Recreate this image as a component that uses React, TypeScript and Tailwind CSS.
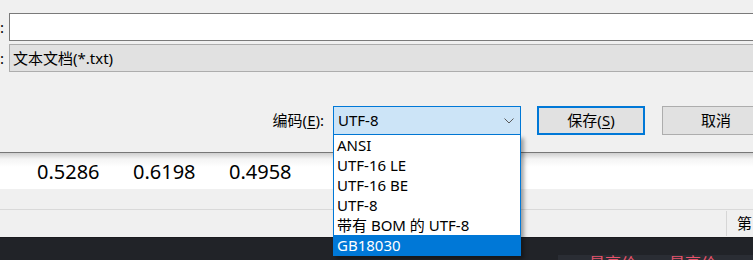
const encodings = ["ANSI", "UTF-16 LE", "UTF-16 BE", "UTF-8", "带有 BOM 的 UTF-8", "GB18030"];
const selected = "GB18030";
const values = ["0.5286", "0.6198", "0.4958"];

const font = "font-['Noto_Sans','Noto_Sans_CJK_SC',sans-serif]";

const Chevron = () => (
  <svg width="10" height="6" viewBox="0 0 10 6" fill="none">
    <polyline points="0.5,0.5 5,5 9.5,0.5" stroke="#5a5a5a" strokeWidth="1" />
  </svg>
);

const App = () => {
  return (
    <div className={`relative w-[753px] h-[260px] overflow-hidden bg-[#f0f0f0] text-[15px] text-black ${font}`}>
      {/* dialog */}
      <div className="h-[153px] border-b border-[#777777] pt-[13px]">
        <div className="flex h-[28px]">
          <span className="w-[9px] leading-[28px]">:</span>
          <div className="flex-1 bg-white border border-[#7a7a7a] border-r-0" />
        </div>
        <div className="flex h-[28px] mt-[3px]">
          <span className="w-[9px] leading-[28px]">:</span>
          <div className="flex-1 bg-[#e1e1e1] border border-[#adadad] border-r-0 pl-[3px] leading-[26px]">
            文本文档(*.txt)
          </div>
        </div>
        <div className="flex h-[29px] mt-[34px]">
          <div className="w-[333px] shrink-0 flex justify-end items-center pr-[9px]">
            编码(<span className="underline underline-offset-2">E</span>):
          </div>
          <div className="w-[188px] shrink-0 flex items-center justify-between bg-[#cce4f7] border border-[#0078d7] pl-[4px] pr-[6px]">
            <span>UTF-8</span>
            <Chevron />
          </div>
          <button className="ml-[16px] w-[108px] shrink-0 bg-[#e1e1e1] border-2 border-[#0078d7] flex items-center justify-center">
            保存(<span className="underline underline-offset-2">S</span>)
          </button>
          <button className="ml-[17px] w-[108px] shrink-0 bg-[#e1e1e1] border border-[#adadad] flex items-center justify-center">
            取消
          </button>
        </div>
      </div>

      {/* table row under the dialog */}
      <div className="h-[36px] flex items-center pl-[37px] bg-[linear-gradient(to_bottom,#cfcfcf,#f4f4f4_6px,#ffffff_14px)] text-[20px]">
        {values.map((v) => (
          <div key={v} className="w-[96px] shrink-0 pt-[1px]">
            {v}
          </div>
        ))}
      </div>
      <div className="h-[20px]" />
      <div className="h-px bg-[#d9d9d9]" />
      <div className="h-[27px] flex">
        <div className="ml-[726px] w-px bg-[#d6d6d6] my-[1px]" />
        <div className="pl-[10px] leading-[27px] whitespace-nowrap">第</div>
      </div>
      <div className="h-[23px] bg-[#212328] border-t border-[#1a1b1f] overflow-hidden">
        <div className="ml-[558px] mt-[17px] h-[10px] bg-[#2a2d34] flex text-[#e8536b] text-[16px] leading-[16px] whitespace-nowrap">
          <span className="ml-[31px]">最高价</span>
          <span className="ml-[32px]">最高价</span>
        </div>
      </div>

      {/* open dropdown */}
      <ul className="absolute left-[333px] top-[135px] w-[188px] bg-white border border-t-0 border-[#0078d7] shadow-[3px_3px_4px_rgba(0,0,0,0.35)]">
        {encodings.map((e) => (
          <li
            key={e}
            className={`h-[20px] pl-[3px] leading-[20px] whitespace-nowrap ${
              e === selected ? "bg-[#0078d7] text-white" : ""
            }`}
          >
            {e}
          </li>
        ))}
      </ul>
    </div>
  );
};
export default App;
